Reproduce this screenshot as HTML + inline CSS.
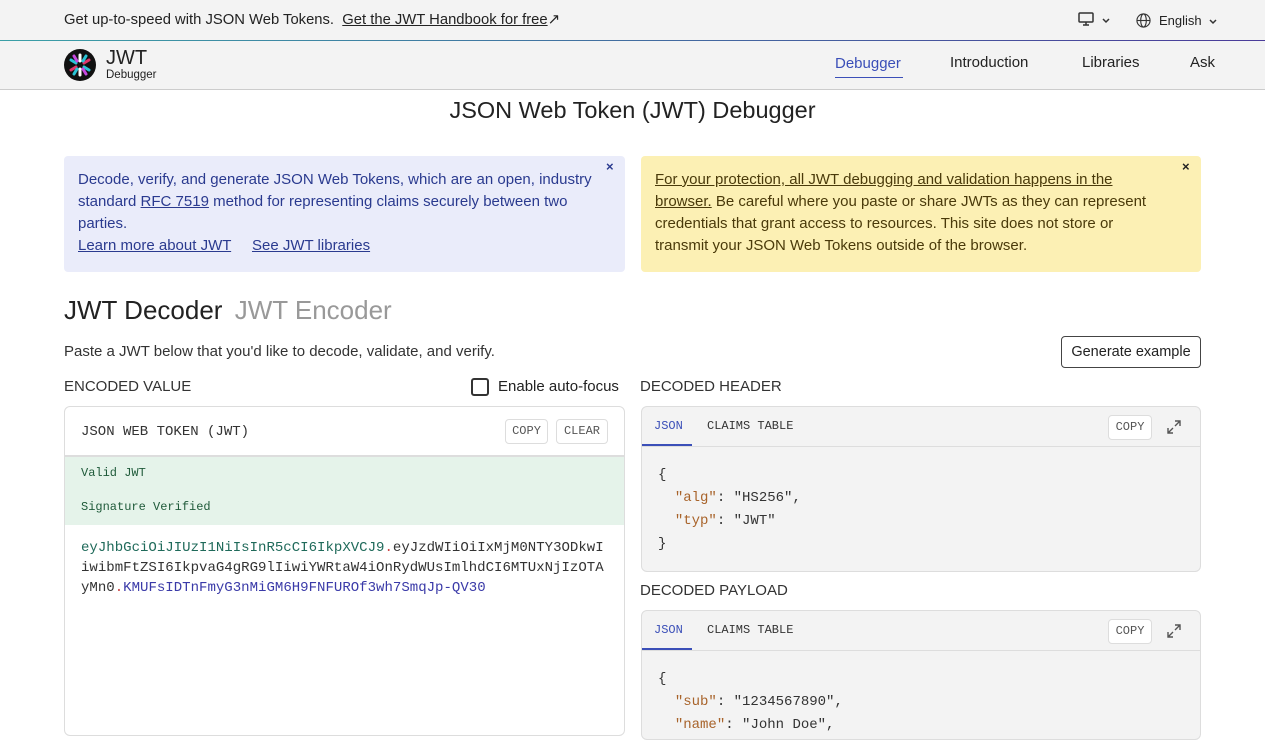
<!DOCTYPE html>
<html><head><meta charset="utf-8"><style>
*{box-sizing:border-box;margin:0;padding:0}
body{width:1280px;height:720px;overflow:hidden;background:#fff;font-family:"Liberation Sans",sans-serif;color:#222;position:relative}
.a{position:absolute}
.mono{font-family:"Liberation Mono",monospace}
.top{left:0;top:0;width:1265px;height:41px;background:#f3f3f3;border-bottom:1px solid;border-image:linear-gradient(90deg,#3a9fa6,#4a3b9a) 1}
.nav{left:0;top:41px;width:1265px;height:49px;background:#f3f3f3;border-bottom:1px solid #ccc}
.sb{left:1265px;top:0;width:15px;height:720px;background:#fff}
.btn{border:1px solid #ddd;border-radius:4px;font-size:12px;color:#555;text-align:center;background:#fff}
u{text-decoration:underline}
</style></head><body>
<div class="a top"></div>
<div class="a" style="left:64px;top:11px;font-size:14.8px;color:#222">Get up-to-speed with JSON Web Tokens. &nbsp;<u>Get the JWT Handbook for free</u>↗</div>
<svg class="a" style="left:1078px;top:12px" width="16" height="14" viewBox="0 0 16 14"><rect x="1" y="1" width="14" height="9" rx="1" fill="none" stroke="#333" stroke-width="1.5"/><path d="M5 13h6M8 10v3" stroke="#333" stroke-width="1.5"/></svg>
<svg class="a" style="left:1102px;top:18px" width="8" height="6" viewBox="0 0 8 6"><path d="M1 1l3 3 3-3" fill="none" stroke="#333" stroke-width="1.5"/></svg>
<svg class="a" style="left:1136px;top:13px" width="15" height="15" viewBox="0 0 16 16" fill="none" stroke="#333" stroke-width="1.2"><circle cx="8" cy="8" r="7"/><ellipse cx="8" cy="8" rx="3" ry="7"/><path d="M1 8h14"/></svg>
<div class="a" style="left:1159px;top:13px;font-size:13px">English</div>
<svg class="a" style="left:1209px;top:19px" width="8" height="6" viewBox="0 0 8 6"><path d="M1 1l3 3 3-3" fill="none" stroke="#333" stroke-width="1.5"/></svg>
<div class="a nav"></div>
<svg class="a" style="left:64px;top:49px" width="32" height="32" viewBox="0 0 32 32"><circle cx="16" cy="16" r="16" fill="#111"/><g stroke-width="3" stroke-linecap="round"><path d="M16 6v6M16 20v6" stroke="#fff"/><path d="M7 11l5 3M20 18l5 3" stroke="#2bc4d6"/><path d="M25 11l-5 3M12 18l-5 3" stroke="#e0356b"/><path d="M10 7l3 5M22 25l-3-5" stroke="#c549e0"/><path d="M22 7l-3 5M10 25l3-5" stroke="#2bc4d6"/></g></svg>
<div class="a" style="left:106px;top:47px;font-size:20px">JWT</div>
<div class="a" style="left:106px;top:69px;font-size:11.5px">Debugger</div>
<div class="a" style="left:835px;top:55px;font-size:15px;color:#3b4fb8">Debugger</div>
<div class="a" style="left:835px;top:77px;width:68px;height:1px;background:#3b4fb8"></div>
<div class="a" style="left:950px;top:54px;font-size:15px">Introduction</div>
<div class="a" style="left:1082px;top:54px;font-size:15px">Libraries</div>
<div class="a" style="left:1190px;top:54px;font-size:15px">Ask</div>
<div class="a" style="left:0;top:97px;width:1265px;text-align:center;font-size:23.5px">JSON Web Token (JWT) Debugger</div>

<div class="a" style="left:64px;top:156px;width:561px;height:116px;background:#eaecfa;border-radius:4px;padding:13px 18px 13px 14px;font-size:15px;line-height:22px;color:#2a3a8f">Decode, verify, and generate JSON Web Tokens, which are an open, industry standard <u>RFC 7519</u> method for representing claims securely between two parties.<br><u>Learn more about JWT</u> &nbsp;&nbsp;&nbsp;&nbsp;<u>See JWT libraries</u></div>
<div class="a" style="left:606px;top:159px;font-size:13px;font-weight:bold;color:#2a3a8f">×</div>
<div class="a" style="left:641px;top:156px;width:560px;height:116px;background:#fcf0b4;border-radius:4px;padding:13px 40px 13px 14px;font-size:15px;line-height:22px;color:#4a3a0a"><u>For your protection, all JWT debugging and validation happens in the browser.</u> Be careful where you paste or share JWTs as they can represent credentials that grant access to resources. This site does not store or transmit your JSON Web Tokens outside of the browser.</div>
<div class="a" style="left:1182px;top:159px;font-size:13px;font-weight:bold">×</div>

<div class="a" style="left:64px;top:295px;font-size:26px">JWT Decoder <span style="color:#999;margin-left:5px">JWT Encoder</span></div>
<div class="a" style="left:64px;top:343px;font-size:15px;color:#333">Paste a JWT below that you'd like to decode, validate, and verify.</div>
<div class="a" style="left:1061px;top:336px;width:140px;height:32px;border:1px solid #444;border-radius:4px;font-size:14.5px;text-align:center;line-height:30px">Generate example</div>
<div class="a" style="left:64px;top:378px;font-size:15px;color:#333">ENCODED VALUE</div>
<div class="a" style="left:471px;top:378px;width:18px;height:18px;border:2px solid #333;border-radius:3px"></div>
<div class="a" style="left:498px;top:378px;font-size:15px">Enable auto-focus</div>
<div class="a" style="left:640px;top:378px;font-size:15px;color:#333">DECODED HEADER</div>

<div class="a" style="left:64px;top:406px;width:561px;height:330px;border:1px solid #ddd;border-radius:6px;overflow:hidden">
 <div class="a mono" style="left:16px;top:17px;font-size:14px;color:#333">JSON WEB TOKEN (JWT)</div>
 <div class="a btn mono" style="left:440px;top:12px;width:43px;height:25px;line-height:23px">COPY</div>
 <div class="a btn mono" style="left:491px;top:12px;width:52px;height:25px;line-height:23px">CLEAR</div>
 <div class="a" style="left:0;top:48px;width:561px;height:70px;background:#e5f3ea;border-top:2px solid #ddd"></div>
 <div class="a mono" style="left:16px;top:59px;font-size:12px;color:#1f5a3a">Valid JWT</div>
 <div class="a mono" style="left:16px;top:93px;font-size:12px;color:#1f5a3a">Signature Verified</div>
 <div class="a mono" style="left:16px;top:131px;width:540px;font-size:14.05px;line-height:20px;white-space:nowrap;color:#333"><span style="color:#1f6a5a">eyJhbGciOiJIUzI1NiIsInR5cCI6IkpXVCJ9</span><span style="color:#c44">.</span>eyJzdWIiOiIxMjM0NTY3ODkwI<br>iwibmFtZSI6IkpvaG4gRG9lIiwiYWRtaW4iOnRydWUsImlhdCI6MTUxNjIzOTA<br>yMn0<span style="color:#c44">.</span><span style="color:#3a3aa8">KMUFsIDTnFmyG3nMiGM6H9FNFUROf3wh7SmqJp-QV30</span></div>
</div>

<div class="a" style="left:641px;top:406px;width:560px;height:166px;border:1px solid #ddd;border-radius:6px;background:#f3f3f3;overflow:hidden">
 <div class="a" style="left:0;top:39px;width:560px;height:1px;background:#ddd"></div>
 <div class="a mono" style="left:12px;top:12px;font-size:12px;color:#3b4fb8">JSON</div>
 <div class="a" style="left:0;top:37px;width:50px;height:2px;background:#3b4fb8"></div>
 <div class="a mono" style="left:65px;top:12px;font-size:12px;color:#333">CLAIMS TABLE</div>
 <div class="a btn mono" style="left:466px;top:8px;width:44px;height:25px;line-height:23px">COPY</div>
 <svg class="a" style="left:525px;top:13px" width="14" height="14" viewBox="0 0 14 14" fill="none" stroke="#555" stroke-width="1.4"><path d="M8 1h5v5M13 1L8 6M6 13H1V8M1 13l5-5"/></svg>
 <div class="a mono" style="left:16px;top:57px;font-size:14px;line-height:23px;color:#333;white-space:pre">{
  <span style="color:#a8632a">"alg"</span>: "HS256",
  <span style="color:#a8632a">"typ"</span>: "JWT"
}</div>
</div>
<div class="a" style="left:640px;top:582px;font-size:15px;color:#333">DECODED PAYLOAD</div>
<div class="a" style="left:641px;top:610px;width:560px;height:130px;border:1px solid #ddd;border-radius:6px;background:#f3f3f3;overflow:hidden">
 <div class="a" style="left:0;top:39px;width:560px;height:1px;background:#ddd"></div>
 <div class="a mono" style="left:12px;top:12px;font-size:12px;color:#3b4fb8">JSON</div>
 <div class="a" style="left:0;top:37px;width:50px;height:2px;background:#3b4fb8"></div>
 <div class="a mono" style="left:65px;top:12px;font-size:12px;color:#333">CLAIMS TABLE</div>
 <div class="a btn mono" style="left:466px;top:8px;width:44px;height:25px;line-height:23px">COPY</div>
 <svg class="a" style="left:525px;top:13px" width="14" height="14" viewBox="0 0 14 14" fill="none" stroke="#555" stroke-width="1.4"><path d="M8 1h5v5M13 1L8 6M6 13H1V8M1 13l5-5"/></svg>
 <div class="a mono" style="left:16px;top:57px;font-size:14px;line-height:23px;color:#333;white-space:pre">{
  <span style="color:#a8632a">"sub"</span>: "1234567890",
  <span style="color:#a8632a">"name"</span>: "John Doe",</div>
</div>
<div class="a sb"></div>
</body></html>
